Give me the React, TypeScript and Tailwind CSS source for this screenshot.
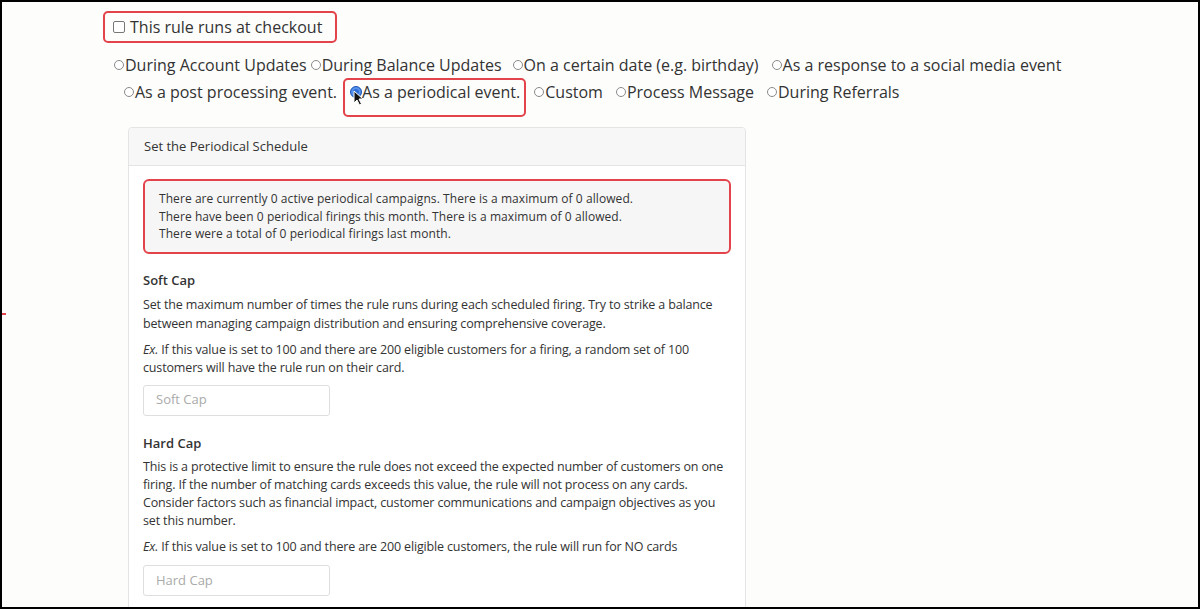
import React from "react";

const Radio = ({ label, className = "" }: { label: string; className?: string }) => (
  <span className={`inline-flex items-center whitespace-nowrap ${className}`}>
    <span className="inline-block w-[10px] h-[10px] rounded-full border border-[#8a8a8a] bg-white mr-[1px]" />
    <span>{label}</span>
  </span>
);

export default function App() {
  return (
    <div
      className="relative w-[1200px] h-[609px] border-2 border-black bg-[#fdfdfc] overflow-hidden text-[#333]"
      style={{ fontFamily: '"Open Sans", "Noto Sans", sans-serif' }}
    >
      <div className="absolute left-0 top-[311px] w-[4px] h-[2px] bg-[#e3434a]" />

      <div className="pl-[101px] pt-[9px]">
        <div className="inline-flex items-center h-[32px] w-[234px] border-2 border-[#e3434a] rounded-[5px] pl-[8px] text-[16px] tracking-[0px]">
          <span className="inline-block w-[12px] h-[12px] border border-[#777] rounded-[2px] bg-white mr-[5px]" />
          <span>This rule runs at checkout</span>
        </div>
      </div>

      <div className="pl-[112px] mt-[10px] text-[16px] leading-[24px]">
        <div className="flex items-center h-[24px]">
          <Radio label="During Account Updates" />
          <Radio label="During Balance Updates" className="ml-[4px]" />
          <Radio label="On a certain date (e.g. birthday)" className="ml-[11px]" />
          <Radio label="As a response to a social media event" className="ml-[13px]" />
        </div>
        <div className="flex items-start h-[39px] mt-[1px] pl-[10px]">
          <Radio label="As a post processing event." className="mt-[2px]" />
          <div className="relative ml-[6px] flex items-start h-[39px] border-2 border-[#e3434a] rounded-[5px] pl-[5px] pr-[4px]">
            <span className="inline-flex items-center whitespace-nowrap">
              <span className="inline-block w-[12px] h-[12px] rounded-full bg-[#2d6fd6] border border-[#1f57b5] shadow-[inset_0_0_0_2px_#5a93ec]" />
              <span>As a periodical event.</span>
            </span>
            <svg className="absolute left-[8px] top-[10px]" width="11" height="16" viewBox="0 0 11 16">
              <path d="M1 1 L1 13 L4 10 L6.5 15 L8.5 14 L6 9 L10 9 Z" fill="#111" stroke="#fff" strokeWidth="1" />
            </svg>
          </div>
          <Radio label="Custom" className="ml-[8px] mt-[2px]" />
          <Radio label="Process Message" className="ml-[13px] mt-[2px]" />
          <Radio label="During Referrals" className="ml-[13px] mt-[2px]" />
        </div>
      </div>

      <div className="ml-[126px] mt-[10px] w-[618px] h-[600px] border border-[#e4e4e4] rounded-[4px] bg-white">
        <div className="h-[38px] bg-[#f7f7f7] border-b border-[#e4e4e4] rounded-t-[4px] flex items-center pl-[15px] text-[13px]">
          Set the Periodical Schedule
        </div>
        <div className="px-[14px] pt-[13px] text-[12.5px] tracking-[-0.15px]">
          <div className="h-[75px] border-2 border-[#e3434a] rounded-[6px] bg-[#f6f6f6] pl-[14px] pt-[9px] text-[12px] tracking-[0.07px] leading-[17.5px]">
            <div>There are currently 0 active periodical campaigns. There is a maximum of 0 allowed.</div>
            <div>There have been 0 periodical firings this month. There is a maximum of 0 allowed.</div>
            <div>There were a total of 0 periodical firings last month.</div>
          </div>

          <div className="mt-[16px] font-semibold text-[13px] tracking-normal leading-[20px]">Soft Cap</div>
          <p className="mt-[5px] leading-[19px] whitespace-nowrap">
            Set the maximum number of times the rule runs during each scheduled firing. Try to strike a balance
            <br />
            between managing campaign distribution and ensuring comprehensive coverage.
          </p>
          <p className="mt-[7.5px] leading-[18.5px] whitespace-nowrap">
            <em>Ex.</em> If this value is set to 100 and there are 200 eligible customers for a firing, a random set of 100
            <br />
            customers will have the rule run on their card.
          </p>
          <div className="mt-[7px] w-[187px] h-[31px] border border-[#dedede] rounded-[3px] bg-white flex items-center pl-[12px] text-[13px] tracking-normal text-[#aaa]">
            Soft Cap
          </div>

          <div className="mt-[17px] font-semibold text-[13px] tracking-normal leading-[20px]">Hard Cap</div>
          <p className="mt-[5.5px] leading-[18px] whitespace-nowrap">
            This is a protective limit to ensure the rule does not exceed the expected number of customers on one
            <br />
            firing. If the number of matching cards exceeds this value, the rule will not process on any cards.
            <br />
            Consider factors such as financial impact, customer communications and campaign objectives as you
            <br />
            set this number.
          </p>
          <p className="mt-[8px] leading-[18px] whitespace-nowrap">
            <em>Ex.</em> If this value is set to 100 and there are 200 eligible customers, the rule will run for NO cards
          </p>
          <div className="mt-[9px] w-[187px] h-[31px] border border-[#dedede] rounded-[3px] bg-white flex items-center pl-[12px] text-[13px] tracking-normal text-[#aaa]">
            Hard Cap
          </div>
        </div>
      </div>
    </div>
  );
}
